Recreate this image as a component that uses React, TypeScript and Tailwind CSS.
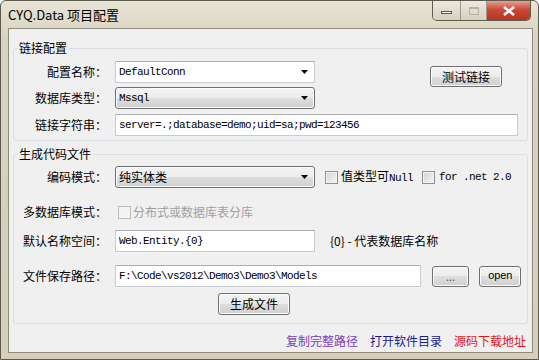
import { ReactNode } from "react";

const cjk = "font-['Noto_Sans_CJK_SC','Noto_Sans',sans-serif]";
const mono = "font-['Liberation_Mono',monospace] text-[11px] tracking-[-0.6px]";
const winBtn =
  "border border-[#707070] rounded-[3px] bg-[linear-gradient(#f4f4f4_0%,#ececec_50%,#dedede_50%,#d0d0d0_100%)] shadow-[inset_0_0_0_1px_#fbfbfb] flex items-center justify-center";
const textBox = "h-[22px] border border-[#c8ccd2] border-t-[#abadb3] bg-white flex items-center pl-[3px]";

const Arrow = () => (
  <svg width="7" height="4" viewBox="0 0 7 4" className="ml-auto mr-[6px]">
    <path d="M0 0h7L3.5 4z" fill="#000" />
  </svg>
);

const Label = ({ children }: { children: ReactNode }) => (
  <div className="w-[93px] mr-[8px] text-right text-[12px] text-black shrink-0">{children}：</div>
);

const CheckBox = ({ disabled }: { disabled?: boolean }) => (
  <div
    className={
      disabled
        ? "w-[13px] h-[13px] border border-[#bcbcbc] bg-[#f4f4f4] shrink-0"
        : "w-[13px] h-[13px] border border-[#8e8f8f] bg-[linear-gradient(135deg,#cfd2d6,#f7f7f7)] shadow-[inset_0_0_0_1px_#f2f2f2] shrink-0"
    }
  />
);

const Group = ({ title, className, children }: { title: string; className?: string; children: ReactNode }) => (
  <fieldset className={"border border-[#d5dfe5] rounded-[3px] " + (className ?? "")}>
    <legend className="ml-[4px] px-[1px] text-[12px] leading-[18px] text-black">{title}</legend>
    {children}
  </fieldset>
);

export default function App() {
  return (
    <div className={"w-[539px] h-[360px] overflow-hidden flex flex-col border border-[#5c5a4f] rounded-t-[6px] bg-[linear-gradient(#e8e4d6,#d8d2be_40px,#d6d0bb)] " + cjk}>
      {/* title bar */}
      <div className="h-[27px] flex items-start shrink-0">
        <div className="pl-[7px] pt-[4px] text-[13px] text-black">CYQ.Data 项目配置</div>
        <div className="ml-auto mr-[7px] flex h-[20px] border border-t-0 border-[#5f5c50] rounded-b-[5px] overflow-hidden">
          <div className="w-[28px] border-r border-[#9c9888] bg-[linear-gradient(#ece9df,#d6d0bc)] flex items-center justify-center">
            <div className="w-[11px] h-[3px] bg-[#f8f8f8] border border-[#59574e] mt-[4px]" />
          </div>
          <div className="w-[26px] border-r border-[#9c9888] bg-[linear-gradient(#ece9df,#d6d0bc)] flex items-center justify-center">
            <div className="w-[10px] h-[8px] border border-[#b4b0a2] border-t-2" />
          </div>
          <div className="w-[43px] bg-[linear-gradient(#e8a090,#c84a38_45%,#b83420)] flex items-center justify-center">
            <svg width="12" height="10" viewBox="0 0 12 10">
              <path d="M1 1l10 8M11 1L1 9" stroke="#fff" strokeWidth="2.6" />
            </svg>
          </div>
        </div>
      </div>

      {/* client area */}
      <div className="ml-[7px] w-[525px] h-[325px] border border-[#8d8a7c] bg-[#f0f0f0] px-[4px] pt-[10px] flex flex-col">
        <Group title="链接配置">
          <div className="pt-[4px] pb-[4px]">
            <div className="flex">
              <div className="flex flex-col gap-[4px]">
                <div className="flex items-center">
                  <Label>配置名称</Label>
                  <div className={textBox + " w-[200px]"}>
                    <span className={mono}>DefaultConn</span>
                    <Arrow />
                  </div>
                </div>
                <div className="flex items-center">
                  <Label>数据库类型</Label>
                  <div className={winBtn + " w-[200px] h-[22px] !justify-start pl-[3px]"}>
                    <span className={mono}>Mssql</span>
                    <Arrow />
                  </div>
                </div>
              </div>
              <div className={winBtn + " ml-[115px] mt-[5px] w-[72px] h-[21px] text-[12px]"}>测试链接</div>
            </div>
            <div className="flex items-center mt-[5px]">
              <Label>链接字符串</Label>
              <div className={textBox + " w-[403px]"}>
                <span className={mono}>server=.;database=demo;uid=sa;pwd=123456</span>
              </div>
            </div>
          </div>
        </Group>

        <Group title="生成代码文件" className="mt-[4px]">
          <div className="pt-[3px] pb-[8px]">
            <div className="flex items-center">
              <Label>编码模式</Label>
              <div className={winBtn + " w-[200px] h-[22px] !justify-start pl-[3px] text-[12px]"}>
                <span>纯实体类</span>
                <Arrow />
              </div>
              <div className="ml-[10px] flex items-center">
                <CheckBox />
                <span className="ml-[3px] text-[12px]">值类型可<span className={mono}>Null</span></span>
              </div>
              <div className="ml-[9px] flex items-center">
                <CheckBox />
                <span className={"ml-[4px] " + mono}>for .net 2.0</span>
              </div>
            </div>
            <div className="flex items-center mt-[13px] h-[22px]">
              <Label>多数据库模式</Label>
              <div className="ml-[3px] flex items-center">
                <CheckBox disabled />
                <span className="ml-[2px] text-[12px] text-[#a0a0a0]">分布式或数据库表分库</span>
              </div>
            </div>
            <div className="flex items-center mt-[7px]">
              <Label>默认名称空间</Label>
              <div className={textBox + " w-[200px]"}>
                <span className={mono}>Web.Entity.{"{0}"}</span>
              </div>
              <span className="ml-[15px] text-[12px]">{"{0}"} - 代表数据库名称</span>
            </div>
            <div className="flex items-center mt-[13px]">
              <Label>文件保存路径</Label>
              <div className={textBox + " w-[306px]"}>
                <span className={mono}>F:\Code\vs2012\Demo3\Demo3\Models</span>
              </div>
              <div className={winBtn + " ml-[11px] w-[37px] h-[21px] text-[11px] text-[#555]"}>...</div>
              <div className={winBtn + " ml-[10px] w-[42px] h-[21px] " + mono}>open</div>
            </div>
            <div className="flex mt-[6px]">
              <div className={winBtn + " ml-[204px] w-[72px] h-[22px] text-[12px]"}>生成文件</div>
            </div>
          </div>
        </Group>

        <div className="mt-[9px] flex justify-end gap-[12px] pr-[2px] text-[12px] leading-[16px]">
          <span className="text-[#7a3cc0]">复制完整路径</span>
          <span className="text-[#1a1a90]">打开软件目录</span>
          <span className="text-[#e01818]">源码下载地址</span>
        </div>
      </div>
    </div>
  );
}
